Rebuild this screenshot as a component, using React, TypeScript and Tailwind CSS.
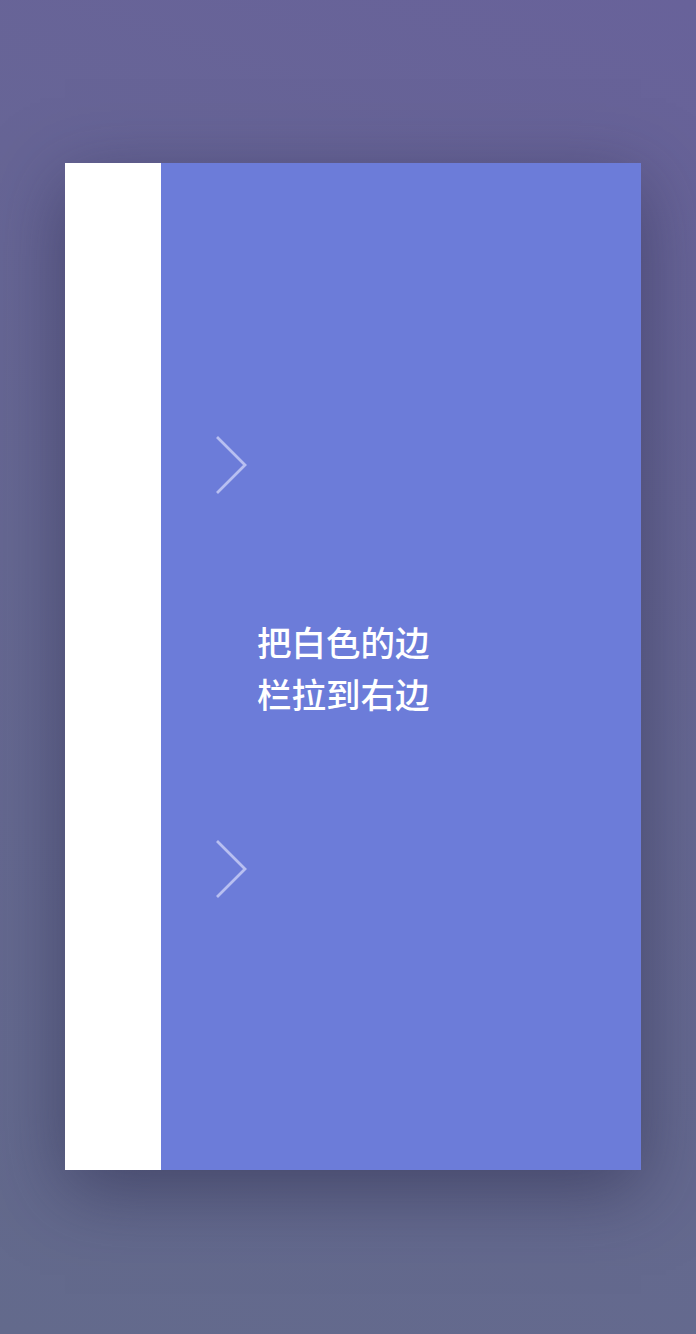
// Thin open chevron as drawn in the reference
function Arrow() {
  return (
    <svg width="32" height="60" viewBox="0 0 32 60" fill="none" className="block">
      <path d="M2 3 L29 30 L2 57" stroke="#b8bff1" strokeWidth="2.8" strokeLinecap="square" />
    </svg>
  )
}

export default function App() {
  return (
    <div className="min-h-screen w-full bg-[linear-gradient(200deg,#68629a_0%,#666892_50%,#636a8c_100%)] pt-[163px] pb-[164px] pl-[65px] pr-[55px]">
      <div className="flex h-[1007px] w-[576px] shadow-[0_20px_70px_rgba(35,35,70,0.5)]">
        {/* Sidebar */}
        <aside className="w-[96px] shrink-0 bg-white" />

        {/* Main panel */}
        <main className="flex flex-1 flex-col items-start justify-center gap-[120px] bg-[#6c7cd9] pl-[55px]">
          <Arrow />
          <p
            className="ml-[41px] text-[34.5px] font-medium leading-[52px] text-white"
            style={{ fontFamily: '"Noto Sans CJK SC", "Noto Sans", sans-serif' }}
          >
            把白色的边
            <br />
            栏拉到右边
          </p>
          <Arrow />
        </main>
      </div>
    </div>
  )
}
